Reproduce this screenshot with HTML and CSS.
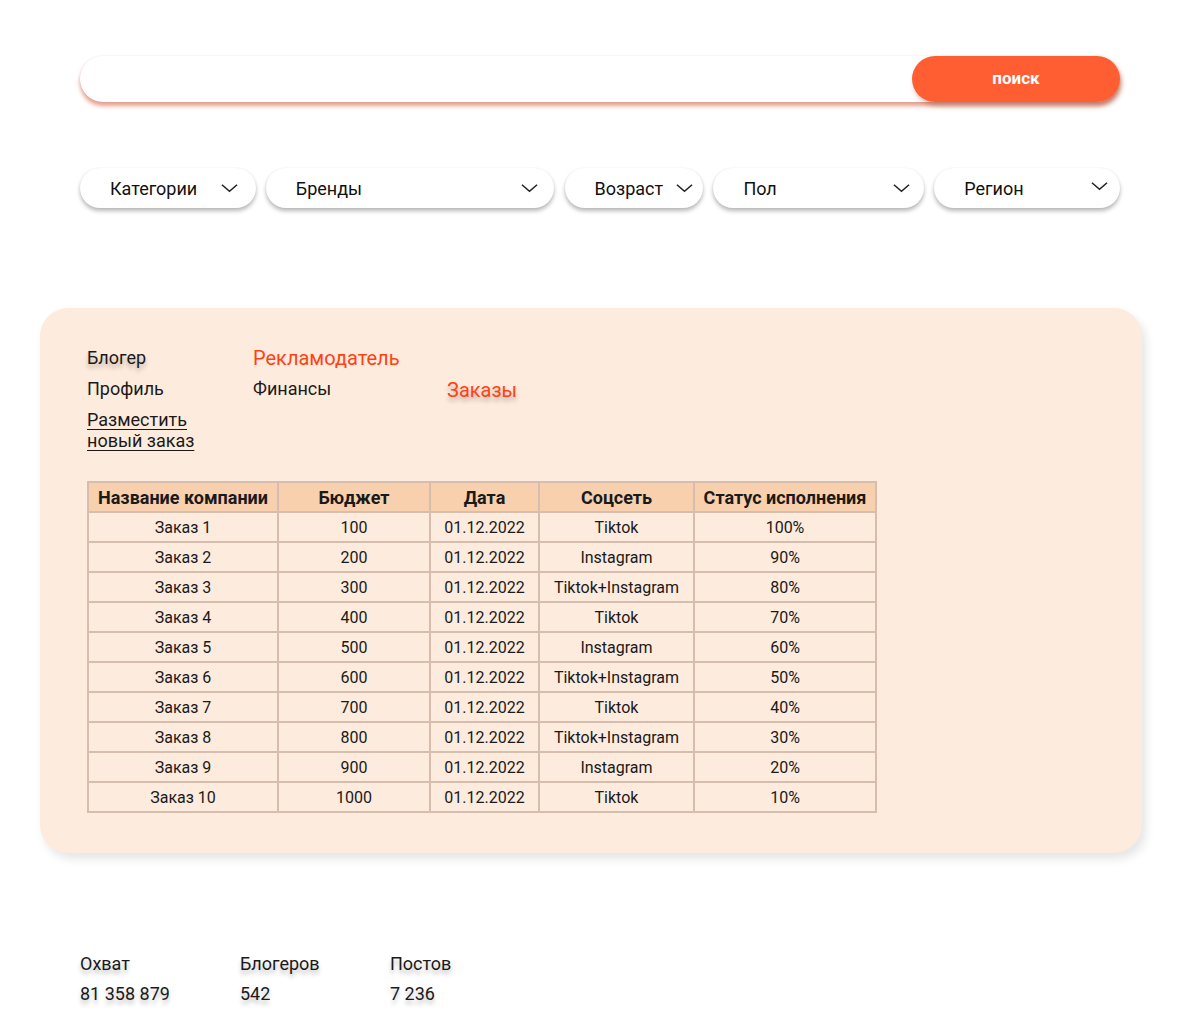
FILE: index.html
```html
<!DOCTYPE html>
<html lang="ru">
<head>
<meta charset="utf-8">
<title>Заказы</title>
<link rel="stylesheet" href="styles.css">
</head>
<body>
<div class="page">
  <div class="search">
    <input class="search-input" type="text">
    <button class="search-btn">поиск</button>
  </div>

  <div class="filters">
    <div class="filter f-cat"><span>Категории</span><svg class="chev" viewBox="0 0 18 10"><path d="M1 1.5l8 7 8-7"/></svg></div>
    <div class="filter f-brand"><span>Бренды</span><svg class="chev" viewBox="0 0 18 10"><path d="M1 1.5l8 7 8-7"/></svg></div>
    <div class="filter f-age"><span>Возраст</span><svg class="chev" viewBox="0 0 18 10"><path d="M1 1.5l8 7 8-7"/></svg></div>
    <div class="filter f-sex"><span>Пол</span><svg class="chev" viewBox="0 0 18 10"><path d="M1 1.5l8 7 8-7"/></svg></div>
    <div class="filter f-reg"><span>Регион</span><svg class="chev" viewBox="0 0 18 10"><path d="M1 1.5l8 7 8-7"/></svg></div>
  </div>

  <div class="panel">
    <div class="nav">
      <div class="nav-row">
        <span class="nav-a shadow">Блогер</span>
        <span class="nav-b active">Рекламодатель</span>
      </div>
      <div class="nav-row">
        <span class="nav-a">Профиль</span>
        <span class="nav-b">Финансы</span>
        <span class="nav-c active shadow">Заказы</span>
      </div>
      <a class="new-order" href="#">Разместить <br>новый заказ</a>
    </div>

    <table class="orders">
      <colgroup>
        <col class="c1"><col class="c2"><col class="c3"><col class="c4"><col class="c5">
      </colgroup>
      <thead>
        <tr><th>Название компании</th><th>Бюджет</th><th>Дата</th><th>Соцсеть</th><th>Статус исполнения</th></tr>
      </thead>
      <tbody>
        <tr><td>Заказ 1</td><td>100</td><td>01.12.2022</td><td>Tiktok</td><td>100%</td></tr>
        <tr><td>Заказ 2</td><td>200</td><td>01.12.2022</td><td>Instagram</td><td>90%</td></tr>
        <tr><td>Заказ 3</td><td>300</td><td>01.12.2022</td><td>Tiktok+Instagram</td><td>80%</td></tr>
        <tr><td>Заказ 4</td><td>400</td><td>01.12.2022</td><td>Tiktok</td><td>70%</td></tr>
        <tr><td>Заказ 5</td><td>500</td><td>01.12.2022</td><td>Instagram</td><td>60%</td></tr>
        <tr><td>Заказ 6</td><td>600</td><td>01.12.2022</td><td>Tiktok+Instagram</td><td>50%</td></tr>
        <tr><td>Заказ 7</td><td>700</td><td>01.12.2022</td><td>Tiktok</td><td>40%</td></tr>
        <tr><td>Заказ 8</td><td>800</td><td>01.12.2022</td><td>Tiktok+Instagram</td><td>30%</td></tr>
        <tr><td>Заказ 9</td><td>900</td><td>01.12.2022</td><td>Instagram</td><td>20%</td></tr>
        <tr><td>Заказ 10</td><td>1000</td><td>01.12.2022</td><td>Tiktok</td><td>10%</td></tr>
      </tbody>
    </table>
  </div>

  <div class="stats">
    <div class="stat s1"><div class="shadow">Охват</div><div class="shadow">81 358 879</div></div>
    <div class="stat s2"><div class="shadow">Блогеров</div><div class="shadow">542</div></div>
    <div class="stat s3"><div class="shadow">Постов</div><div class="shadow">7 236</div></div>
  </div>
</div>
</body>
</html>
```

FILE: styles.css
```css
* { box-sizing: border-box; }
html, body { margin: 0; padding: 0; background: #fff; }
body {
  font-family: Roboto, "Liberation Sans", sans-serif;
  color: #1a1a1a;
}
.page {
  width: 1200px;
  padding-top: 56px;
}
.search {
  display: flex;
  margin: 0 80px;
  height: 46px;
  border-radius: 23px;
  background: #fff;
  box-shadow: 0 4px 4px rgba(214, 96, 70, 0.6), 0 0 3px rgba(0,0,0,0.08);
}
.search-input {
  flex: 1;
  border: none;
  background: transparent;
  outline: none;
  border-radius: 23px 0 0 23px;
}
.search-btn {
  width: 208px;
  height: 46px;
  border: none;
  border-radius: 23px;
  background: #FF5E32;
  color: #fff;
  font-family: Roboto, "Liberation Sans", sans-serif;
  font-weight: 700;
  font-size: 17px;
  padding: 0 0 3px;
  box-shadow: 2px 4px 5px rgba(140, 60, 40, 0.35);
}
.filters {
  display: flex;
  margin: 66px 80px 0;
  gap: 10px;
}
.filter {
  height: 40px;
  border-radius: 20px;
  background: #fff;
  box-shadow: 0 3px 4px rgba(0,0,0,0.28), 0 0 2px rgba(0,0,0,0.06);
  display: flex;
  align-items: center;
  justify-content: space-between;
  font-size: 18px;
  color: #111;
}
.chev { width: 17px; height: 10px; fill: none; stroke: #222; stroke-width: 1.6; }
.f-cat { width: 176px; padding: 0 18px 0 30px; }
.f-brand { width: 288px; padding: 0 16px 0 30px; }
.f-age { width: 139px; padding: 0 10px 0 30px; margin-left: 1px; }
.f-sex { width: 211px; padding: 0 14px 0 30px; }
.f-reg { width: 186px; padding: 0 12px 0 30px; }
.f-reg .chev { margin-top: -4px; }

.panel {
  margin: 100px 58px 0 40px;
  background: #FDEBDD;
  border-radius: 28px;
  padding: 34px 47px 40px;
  box-shadow: 4px 6px 10px rgba(0,0,0,0.10);
}
.nav { font-size: 18px; color: #1a1a1a; }
.nav-row { display: flex; align-items: center; height: 31px; }
.nav-a { width: 166px; }
.nav-b { width: 194px; }
.nav-row:first-child .nav-b { font-size: 20px; }
.nav-c { font-size: 20px; margin-top: 2px; }
.active { color: #FF4213; }
.shadow { text-shadow: 0 4px 4px rgba(0,0,0,0.25); }
.new-order {
  display: inline-block;
  color: #1a1a1a;
  text-decoration: underline;
  text-underline-offset: 3px;
  line-height: 21px;
  margin-top: 5px;
}
.orders {
  margin-top: 30px;
  border-collapse: collapse;
  table-layout: fixed;
  width: 788px;
  font-size: 16px;
  color: #1a1a1a;
}
.c1 { width: 190px; }
.c2 { width: 152px; }
.c3 { width: 109px; }
.c4 { width: 155px; }
.c5 { width: 182px; }
.orders th, .orders td {
  border: 2px solid #D6BEAE;
  height: 30px;
  padding: 0;
  text-align: center;
  white-space: nowrap;
}
.orders th {
  background: #F9D0AD;
  font-weight: 700;
  font-size: 18px;
  height: 30px;
}
.orders td { background: #FDEBDD; }

.stats {
  display: flex;
  margin: 98px 0 0 80px;
  font-size: 18px;
  color: #1a1a1a;
}
.stat div { height: 30px; line-height: 26px; }
.s1 { width: 160px; }
.s2 { width: 150px; }
```
